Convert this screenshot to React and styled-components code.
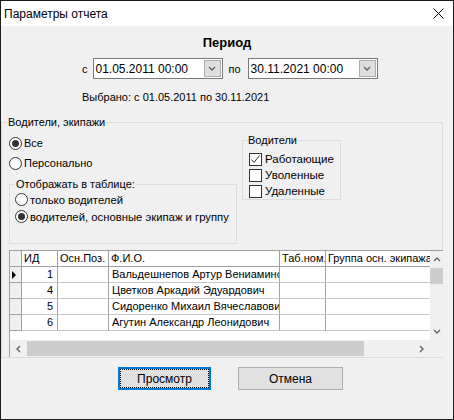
import React from "react";
import styled, { createGlobalStyle } from "styled-components";

const GlobalStyle = createGlobalStyle`
  html, body {
    margin: 0;
    padding: 0;
    background: #f0f0f0;
  }
  * { box-sizing: border-box; }
`;

const rows = [
    { id: 1, name: "Вальдешнепов Артур Вениаминович", current: true },
    { id: 4, name: "Цветков Аркадий Эдуардович" },
    { id: 5, name: "Сидоренко Михаил Вячеславович" },
    { id: 6, name: "Агутин Александр Леонидович" },
];

const columns = [
    { key: "ind", title: "", width: 12 },
    { key: "id", title: "ИД", width: 36 },
    { key: "pos", title: "Осн.Поз.", width: 51 },
    { key: "name", title: "Ф.И.О.", width: 171 },
    { key: "tab", title: "Таб.ном.", width: 46 },
    { key: "group", title: "Группа осн. экипажа", width: 140 },
];

function Chevron({ dir = "down", color = "#606060" }) {
    const pts = {
        down: "1,2 4,5 7,2",
        up: "1,5 4,2 7,5",
        left: "5,1 2,4 5,7",
        right: "2,1 5,4 2,7",
    }[dir];
    return (
        <svg width="8" height="8" viewBox="0 0 8 8">
            <polyline points={pts} fill="none" stroke={color} strokeWidth="1.3" />
        </svg>
    );
}

function Radio({ checked, children }) {
    return (
        <RadioRow>
            <RadioCircle $checked={checked} />
            {children}
        </RadioRow>
    );
}

function Check({ checked, children }) {
    return (
        <CheckRow>
            <CheckBox>
                {checked && (
                    <svg width="11" height="11" viewBox="0 0 11 11">
                        <polyline points="1.5,5.5 4,8.5 9.5,1.5" fill="none" stroke="#333" strokeWidth="1" />
                    </svg>
                )}
            </CheckBox>
            {children}
        </CheckRow>
    );
}

function App() {
    return (
        <>
            <GlobalStyle />
            <Window>
                <TitleBar>
                    <Title>Параметры отчета</Title>
                    <CloseIcon width="11" height="11" viewBox="0 0 11 11">
                        <path d="M0.5 0.5 L10.5 10.5 M10.5 0.5 L0.5 10.5" stroke="#000" strokeWidth="1" />
                    </CloseIcon>
                </TitleBar>
                <Body>
                    <Heading>Период</Heading>
                    <DateRow>
                        <span>с</span>
                        <Combo $gap={5}>
                            <ComboText>01.05.2011 00:00</ComboText>
                            <DropButton><Chevron /></DropButton>
                        </Combo>
                        <ToLabel>по</ToLabel>
                        <Combo $gap={0}>
                            <ComboText>30.11.2021 00:00</ComboText>
                            <DropButton><Chevron /></DropButton>
                        </Combo>
                    </DateRow>
                    <Selected>Выбрано: с 01.05.2011 по 30.11.2021</Selected>

                    <OuterGroup>
                        <OuterLegend>Водители, экипажи</OuterLegend>
                        <TopArea>
                            <LeftColumn>
                                <Radio checked>Все</Radio>
                                <Radio>Персонально</Radio>
                                <InnerGroup>
                                    <InnerLegend>Отображать в таблице:</InnerLegend>
                                    <InnerRadio>
                                        <RadioCircle />только водителей
                                    </InnerRadio>
                                    <InnerRadio>
                                        <RadioCircle $checked />водителей, основные экипаж и группу
                                    </InnerRadio>
                                </InnerGroup>
                            </LeftColumn>
                            <DriversGroup>
                                <DriversLegend>Водители</DriversLegend>
                                <Check checked>Работающие</Check>
                                <Check>Уволенные</Check>
                                <Check>Удаленные</Check>
                            </DriversGroup>
                        </TopArea>

                        <GridFrame>
                            <GridMain>
                                <Cells>
                                    <HeaderRow>
                                        {columns.map(c => (
                                            <HeaderCell key={c.key} $w={c.width} $ind={c.key === "ind"}>
                                                {c.title}
                                            </HeaderCell>
                                        ))}
                                    </HeaderRow>
                                    {rows.map(r => (
                                        <DataRow key={r.id}>
                                            <IndCell $w={12}>
                                                {r.current && (
                                                    <svg width="5" height="8" viewBox="0 0 5 8">
                                                        <polygon points="0,0 4,4 0,8" fill="#000" />
                                                    </svg>
                                                )}
                                            </IndCell>
                                            <Cell $w={36} $right>{r.id}</Cell>
                                            <Cell $w={51}></Cell>
                                            <Cell $w={171}>{r.name}</Cell>
                                            <Cell $w={46}></Cell>
                                            <Cell $w={140}></Cell>
                                        </DataRow>
                                    ))}
                                </Cells>
                                <VScroll>
                                    <ScrollButton $v><Chevron dir="up" /></ScrollButton>
                                    <VTrack>
                                        <VThumb />
                                    </VTrack>
                                    <ScrollButton $v><Chevron dir="down" /></ScrollButton>
                                </VScroll>
                            </GridMain>
                            <HScrollRow>
                                <HScroll>
                                    <ScrollButton><Chevron dir="left" /></ScrollButton>
                                    <HTrack>
                                        <HThumb />
                                    </HTrack>
                                    <ScrollButton><Chevron dir="right" /></ScrollButton>
                                </HScroll>
                                <Corner />
                            </HScrollRow>
                        </GridFrame>
                    </OuterGroup>

                    <ButtonRow>
                        <DialogButton $primary $w={93}>Просмотр</DialogButton>
                        <DialogButton $w={105}>Отмена</DialogButton>
                    </ButtonRow>
                </Body>
            </Window>
        </>
    );
}

const Window = styled.div`
    width: 454px;
    height: 420px;
    border: 1px solid #1c1c1c;
    background: #f0f0f0;
    display: flex;
    flex-direction: column;
    font-family: "Liberation Sans", Arial, sans-serif;
    font-size: 11px;
    color: #000;
    overflow: hidden;
`

const TitleBar = styled.div`
    height: 25px;
    background: #fff;
    display: flex;
    align-items: center;
    justify-content: space-between;
    padding: 0 9px 0 3px;
    flex-shrink: 0;
`

const Title = styled.span`
    font-size: 12px;
`

const CloseIcon = styled.svg`
    display: block;
    margin-top: -1px;
`

const Body = styled.div`
    flex: 1;
    display: flex;
    flex-direction: column;
`

const Heading = styled.div`
    margin-top: 9px;
    text-align: center;
    font-weight: bold;
    font-size: 13px;
    line-height: 16px;
`

const DateRow = styled.div`
    margin-top: 7px;
    padding-left: 81px;
    display: flex;
    align-items: center;
    height: 21px;
    line-height: 14px;
`

const Combo = styled.div`
    margin-left: ${p => p.$gap}px;
    width: 130px;
    height: 21px;
    border: 1px solid #7a7a7a;
    background: #fff;
    display: flex;
    align-items: center;
    padding-left: 2px;
`

const ComboText = styled.span`
    flex: 1;
    font-size: 12px;
    white-space: nowrap;
`

const DropButton = styled.div`
    width: 17px;
    height: 17px;
    margin-right: 1px;
    background: #dedede;
    border: 1px solid #acacac;
    display: flex;
    align-items: center;
    justify-content: center;
`

const ToLabel = styled.span`
    margin: 0 7px 0 6px;
`

const Selected = styled.div`
    margin-top: 11px;
    padding-left: 81px;
    line-height: 14px;
`

const OuterGroup = styled.fieldset`
    margin: 11px 10px 0 0;
    padding: 0 0 0 7px;
    min-width: 0;
    border: 1px solid #dcdcdc;
`

const OuterLegend = styled.legend`
    padding: 0 1px;
    margin-left: -2px;
    line-height: 14px;
`

const TopArea = styled.div`
    display: flex;
    align-items: flex-start;
    gap: 5px;
    padding-top: 4px;
`

const LeftColumn = styled.div`
    width: 228px;
    display: flex;
    flex-direction: column;
`

const RadioRow = styled.label`
    height: 20px;
    display: flex;
    align-items: center;
    gap: 2px;
`

const RadioCircle = styled.span`
    width: 13px;
    height: 13px;
    border: 1px solid #333;
    border-radius: 50%;
    background: #fff;
    display: flex;
    align-items: center;
    justify-content: center;
    flex-shrink: 0;

    &::after {
        content: "";
        width: 7px;
        height: 7px;
        border-radius: 50%;
        background: ${p => (p.$checked ? "#333" : "transparent")};
    }
`

const InnerGroup = styled.fieldset`
    margin: 4px 0 0;
    padding: 0 0 18px 5px;
    min-width: 0;
    border: 1px solid #dcdcdc;
`

const InnerLegend = styled.legend`
    padding: 0 1px;
    margin-left: 0;
    line-height: 14px;
`

const InnerRadio = styled(RadioRow)`
    height: 17px;
    font-size: 11.3px;
`

const DriversGroup = styled.fieldset`
    margin: 0;
    width: 99px;
    padding: 4px 0 0 6px;
    min-width: 0;
    border: 1px solid #dcdcdc;
`

const DriversLegend = styled.legend`
    padding: 0;
    margin-left: -1px;
    line-height: 14px;
`

const CheckRow = styled.label`
    height: 16px;
    display: flex;
    align-items: center;
    gap: 3px;
    font-size: 11.5px;
`

const CheckBox = styled.span`
    width: 13px;
    height: 13px;
    border: 1px solid #333;
    background: #fff;
    display: flex;
    align-items: center;
    justify-content: center;
    flex-shrink: 0;
`

const GridFrame = styled.div`
    margin: 6px -1px 0 0;
    height: 107px;
    border-top: 1px solid #a0a0a0;
    border-left: 1px solid #a0a0a0;
    display: flex;
    flex-direction: column;
`

const GridMain = styled.div`
    display: flex;
    height: 89px;
`

const Cells = styled.div`
    flex: 1;
    background: #fff;
    overflow: hidden;
`

const HeaderRow = styled.div`
    display: flex;
    height: 16px;
`

const HeaderCell = styled.div`
    flex: 0 0 ${p => p.$w}px;
    border-right: 1px solid #a0a0a0;
    border-bottom: 1px solid #a0a0a0;
    background: ${p => (p.$ind ? "#f0f0f0" : "#fff")};
    padding-left: 2px;
    line-height: 15px;
    white-space: nowrap;
    overflow: hidden;
`

const DataRow = styled.div`
    display: flex;
    height: 16px;
`

const Cell = styled.div`
    flex: 0 0 ${p => p.$w}px;
    border-right: 1px solid #a0a0a0;
    border-bottom: 1px solid #c8c8c8;
    padding: 0 4px 0 3px;
    text-align: ${p => (p.$right ? "right" : "left")};
    line-height: 15px;
    font-size: 11px;
    white-space: nowrap;
    overflow: hidden;
`

const IndCell = styled.div`
    flex: 0 0 ${p => p.$w}px;
    background: #f0f0f0;
    border-right: 1px solid #a0a0a0;
    border-bottom: 1px solid #a0a0a0;
    display: flex;
    align-items: center;
    padding-left: 2px;
`

const VScroll = styled.div`
    width: 13px;
    background: #f0f0f0;
    display: flex;
    flex-direction: column;
`

const ScrollButton = styled.div`
    ${p => (p.$v ? "height: 17px;" : "width: 17px;")}
    flex-shrink: 0;
    display: flex;
    align-items: center;
    justify-content: center;
`

const VTrack = styled.div`
    flex: 1;
`

const VThumb = styled.div`
    height: 16px;
    background: #cdcdcd;
`

const HScrollRow = styled.div`
    display: flex;
    height: 17px;
    background: #f0f0f0;
`

const HScroll = styled.div`
    flex: 1;
    display: flex;
`

const HTrack = styled.div`
    flex: 1;
    display: flex;
    align-items: center;
`

const HThumb = styled.div`
    width: 337px;
    height: 15px;
    background: #cdcdcd;
`

const Corner = styled.div`
    width: 13px;
`

const ButtonRow = styled.div`
    margin-top: 9px;
    padding-left: 117px;
    display: flex;
    gap: 27px;
`

const DialogButton = styled.div`
    width: ${p => p.$w}px;
    height: 23px;
    background: #e1e1e1;
    border: ${p => (p.$primary ? "2px solid #0078d7" : "1px solid #adadad")};
    outline: ${p => (p.$primary ? "1px dotted #000" : "none")};
    outline-offset: -3px;
    display: flex;
    align-items: center;
    justify-content: center;
    font-size: 12px;
`

export default App;
